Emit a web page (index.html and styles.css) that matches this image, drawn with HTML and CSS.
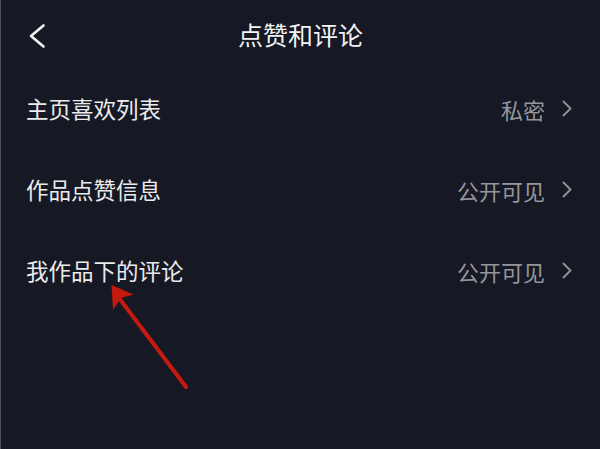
FILE: index.html
```html
<!DOCTYPE html>
<html lang="zh-CN">
<head>
<meta charset="utf-8">
<title>点赞和评论</title>
<link rel="stylesheet" href="styles.css">
</head>
<body>
<div class="page">
  <header class="topbar">
    <span class="back">
      <svg width="20" height="26" viewBox="0 0 20 26"><path d="M16.5 2.5 L4 13 L16.5 23.5" fill="none" stroke="#f2f2f4" stroke-width="2.6" stroke-linecap="round" stroke-linejoin="round"/></svg>
    </span>
    <h1 class="title">点赞和评论</h1>
    <span class="spacer"></span>
  </header>
  <ul class="list">
    <li class="row">
      <span class="label">主页喜欢列表</span>
      <span class="value">私密<svg class="chev" width="11" height="17" viewBox="0 0 11 17"><path d="M1.5 1.5 L8.5 8.5 L1.5 15.5" fill="none" stroke="#8d8e95" stroke-width="2" stroke-linecap="round" stroke-linejoin="round"/></svg></span>
    </li>
    <li class="row">
      <span class="label">作品点赞信息</span>
      <span class="value">公开可见<svg class="chev" width="11" height="17" viewBox="0 0 11 17"><path d="M1.5 1.5 L8.5 8.5 L1.5 15.5" fill="none" stroke="#8d8e95" stroke-width="2" stroke-linecap="round" stroke-linejoin="round"/></svg></span>
    </li>
    <li class="row">
      <span class="label">我作品下的评论</span>
      <span class="value">公开可见<svg class="chev" width="11" height="17" viewBox="0 0 11 17"><path d="M1.5 1.5 L8.5 8.5 L1.5 15.5" fill="none" stroke="#8d8e95" stroke-width="2" stroke-linecap="round" stroke-linejoin="round"/></svg></span>
    </li>
  </ul>
  <svg class="annotation" width="600" height="449" viewBox="0 0 600 449">
    <line x1="119" y1="298" x2="186" y2="387" stroke="#c41a0f" stroke-width="4" stroke-linecap="round"/>
    <polygon points="111.5,285 133.5,294.5 121,298 113,310" fill="#c41a0f"/>
  </svg>
</div>
</body>
</html>
```
FILE: styles.css
```css
html, body {
  margin: 0;
  padding: 0;
  background: #161823;
}
body {
  font-family: "Noto Sans CJK SC", "Noto Sans", sans-serif;
}
.page {
  position: relative;
  width: 599px;
  height: 449px;
  background: #161823;
  border-left: 1px solid #4b4d58;
  overflow: hidden;
}
.topbar {
  height: 68px;
  display: grid;
  grid-template-columns: 60px 1fr 60px;
  align-items: center;
}
.back {
  display: flex;
  padding-left: 26px;
  margin-top: 4px;
}
.title {
  margin: 0;
  text-align: center;
  font-size: 25px;
  font-weight: 400;
  color: #f2f2f4;
  line-height: 1;
}
.list {
  list-style: none;
  margin: 0;
  padding: 0;
}
.row {
  height: 81px;
  display: flex;
  align-items: center;
  justify-content: space-between;
  padding: 0 27px 0 25px;
}
.label {
  font-size: 22.5px;
  color: #ebebed;
  line-height: 1;
}
.value {
  display: flex;
  align-items: center;
  gap: 17px;
  font-size: 22px;
  color: #95969c;
  line-height: 1;
}
.chev {
  display: block;
}
.annotation {
  position: absolute;
  left: -1px;
  top: 0;
  pointer-events: none;
}
```
